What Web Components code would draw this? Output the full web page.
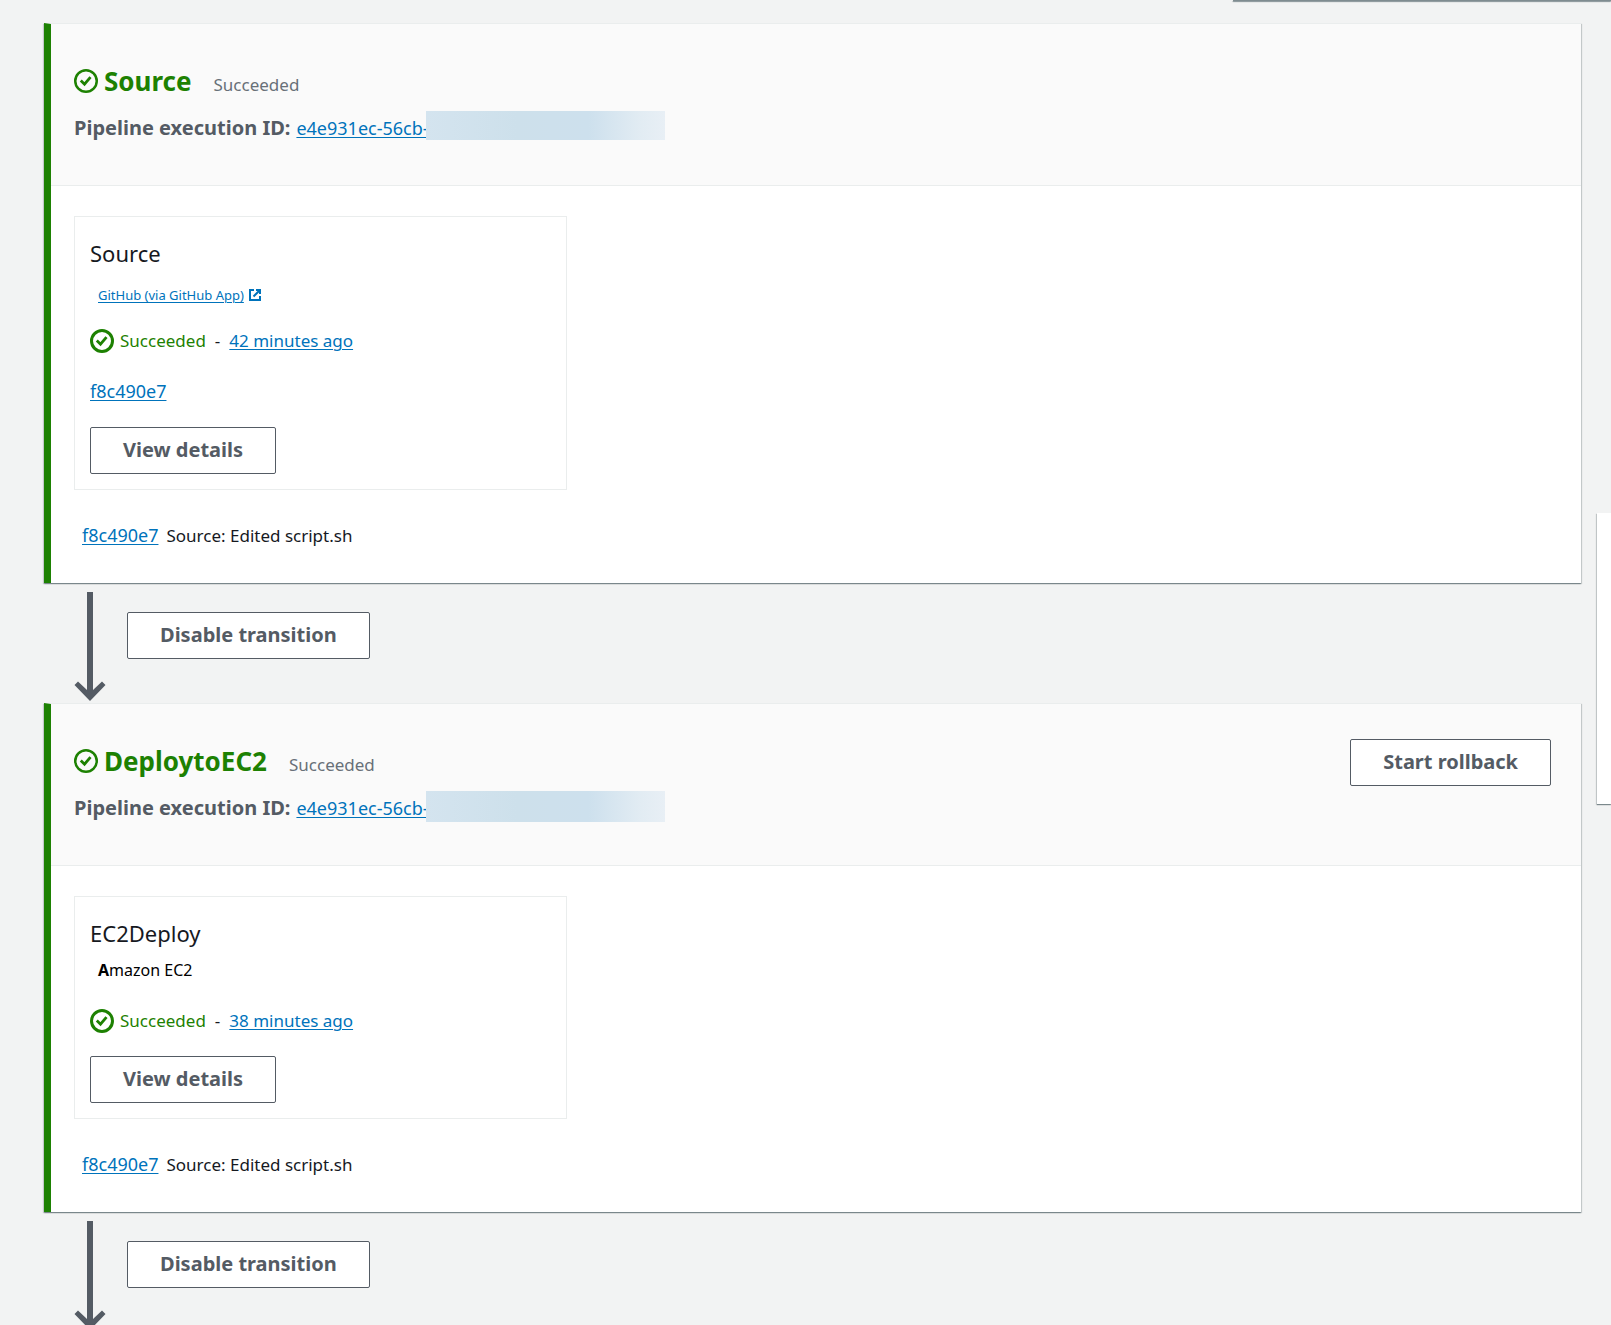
<!DOCTYPE html>
<html lang="en">
<head>
<meta charset="utf-8">
<title>Pipeline</title>
<style>
body{
	margin:0;
	background:#f2f3f3;
	color:#16191f;
	font-family:"Noto Sans","Open Sans",sans-serif;
	font-size:17px;
	line-height:24px;
}
</style>
</head>
<body>
<pipeline-view>
	<side-panel class="top"></side-panel>
	<side-panel class="help"></side-panel>
	<pipeline-stage name="Source" execution="e4e931ec-56cb-">
		<stage-action name="Source" when="42 minutes ago" revision="f8c490e7">
			<external-link slot="provider">GitHub (via GitHub App)</external-link>
		</stage-action>
		<commit-line slot="commit" revision="f8c490e7">Source: Edited script.sh</commit-line>
	</pipeline-stage>
	<stage-transition></stage-transition>
	<pipeline-stage name="DeploytoEC2" execution="e4e931ec-56cb-" class="tall-mask">
		<aws-button slot="actions">Start rollback</aws-button>
		<stage-action name="EC2Deploy" when="38 minutes ago">
			<span slot="provider"><b>A</b>mazon EC2</span>
		</stage-action>
		<commit-line slot="commit" revision="f8c490e7">Source: Edited script.sh</commit-line>
	</pipeline-stage>
	<stage-transition></stage-transition>
</pipeline-view>

<script>
const linkStyle = `
a{
	color:#0073bb;
	text-decoration:underline;
	text-underline-offset:2px;
	text-decoration-thickness:1px;
}
`
const render = (element, html) => {
	const template = document.createElement("template")
	template.innerHTML = html
	element.attachShadow({mode: "open"}).appendChild(template.content.cloneNode(true))
}

class PipelineView extends HTMLElement{
	constructor(){
		super()
		render(this, `
<style>
:host{
	display:block;
	position:relative;
	box-sizing:border-box;
	height:100vh;
	overflow:hidden;
	padding:23px 30px 0 44px;
}
</style>
<slot></slot>`)
	}
}

// neighbouring panels that peek in over the edges of the view
class SidePanel extends HTMLElement{
	constructor(){
		super()
		render(this, `
<style>
:host{
	position:absolute;
	right:0;
	background:#fff;
	box-shadow:0 1px 1px 0 rgba(0,28,36,0.4), -1px 1px 1px 0 rgba(0,28,36,0.15);
}
:host(.top){
	top:0;
	width:378px;
	height:1px;
	background:#7f8c90;
}
:host(.help){
	top:513px;
	width:14px;
	height:291px;
}
</style>`)
	}
}

class AwsButton extends HTMLElement{
	constructor(){
		super()
		render(this, `
<style>
:host{
	display:inline-block;
}
button{
	display:block;
	padding:0 32px 2px;
	border:1px solid #545b64;
	border-radius:2px;
	background:#fff;
	color:#545b64;
	font:bold 20px/43px "Noto Sans","Open Sans",sans-serif;
	white-space:nowrap;
	cursor:pointer;
}
button:hover{
	background:#fafafa;
	color:#16191f;
}
</style>
<button type="button"><slot></slot></button>`)
	}
}

class StatusIcon extends HTMLElement{
	constructor(){
		super()
		const weight = this.getAttribute("weight") || 2.5
		render(this, `
<style>
:host{
	display:block;
	flex:none;
	width:24px;
	height:24px;
	color:#1d8102;
}
svg{
	display:block;
}
</style>
<svg width="24" height="24" viewBox="0 0 24 24" fill="none" stroke="currentColor" stroke-width="${weight}" aria-hidden="true">
	<circle cx="12" cy="12" r="${12 - weight / 2}"/>
	<path d="M6.800 11.500l3.700 3.700 6-7" stroke-width="2.800"/>
</svg>`)
	}
}

class ExternalLink extends HTMLElement{
	constructor(){
		super()
		render(this, `
<style>
${linkStyle}
:host{
	display:block;
	padding:5px 0;
	margin-bottom:-10px;
	font-size:13px;
}
a{
	display:inline-flex;
	align-items:center;
	gap:5px;
	text-decoration:none;
}
span{
	text-decoration:underline;
	text-underline-offset:2px;
}
</style>
<a href="#"><span><slot></slot></span><svg width="12" height="12" viewBox="0 0 12 12" fill="none" stroke="currentColor" stroke-width="2" aria-hidden="true">
	<path d="M5 1H1v10h10V7"/>
	<path d="M7 1h4v4M11 1L4.500 7.500"/>
</svg></a>`)
	}
}

class CommitLine extends HTMLElement{
	constructor(){
		super()
		render(this, `
<style>
${linkStyle}
:host{
	display:flex;
	align-items:baseline;
	gap:8px;
	padding:33px 8px 35px;
}
a{
	font-size:18px;
}
</style>
<a href="#">${this.getAttribute("revision")}</a><span><slot></slot></span>`)
	}
}

class StageAction extends HTMLElement{
	constructor(){
		super()
		const revision = this.getAttribute("revision")
		render(this, `
<style>
${linkStyle}
:host{
	display:block;
	box-sizing:border-box;
	max-width:493px;
	padding:21px 15px 15px;
	border:1px solid #eaeded;
}
h3{
	margin:0;
	font-size:22px;
	font-weight:400;
	line-height:30px;
}
.provider{
	height:24px;
	padding:10px 8px 27px;
	font-size:16px;
	color:#000;
}
.status{
	display:flex;
	align-items:center;
	gap:6px;
	margin-bottom:23px;
}
.status b{
	color:#1d8102;
	font-weight:400;
}
.dash{
	padding:0 3px;
}
.revision{
	margin:0 0 24px;
	padding-top:3px;
	font-size:18px;
}
</style>
<h3>${this.getAttribute("name")}</h3>
<div class="provider"><slot name="provider"></slot></div>
<div class="status">
	<status-icon weight="3"></status-icon>
	<b>Succeeded</b><span class="dash">-</span><a href="#">${this.getAttribute("when")}</a>
</div>
${revision ? `<p class="revision"><a href="#">${revision}</a></p>` : ""}
<aws-button>View details</aws-button>`)
	}
}

class PipelineStage extends HTMLElement{
	constructor(){
		super()
		render(this, `
<style>
${linkStyle}
:host{
	display:block;
	border-top:1px solid #eaeded;
	border-left:7px solid #1d8102;
	background:#fff;
	box-shadow:0 1px 1px 0 rgba(0,28,36,0.3), 1px 1px 1px 0 rgba(0,28,36,0.15), -1px 1px 1px 0 rgba(0,28,36,0.15);
}
header{
	display:flex;
	justify-content:space-between;
	align-items:flex-start;
	padding:35px 30px 40px 23px;
	border-bottom:1px solid #eaeded;
	background:#fafafa;
}
.heading{
	padding-top:6px;
}
.title{
	display:flex;
	align-items:baseline;
	gap:6px;
	margin-bottom:14px;
}
status-icon{
	align-self:center;
}
h2{
	margin:0;
	color:#1d8102;
	font-size:26px;
	line-height:32px;
}
.state{
	margin-left:16px;
	color:#687078;
}
.execution{
	display:flex;
	align-items:baseline;
	height:34px;
	line-height:34px;
}
.execution b{
	margin-right:6px;
	color:#545b64;
	font-size:20px;
}
.execution a{
	font-size:18px;
}
/* covers the tail of the execution id */
.mask{
	align-self:flex-start;
	width:239px;
	height:29px;
	margin-left:-3px;
	background:linear-gradient(90deg, #d4e4ef, #cde0eb 38%, #cde0ed 68%, #e2ecf3 90%, #e8eff5);
}
:host(.tall-mask) .mask{
	height:31px;
}
.body{
	padding:30px 23px 0;
}
</style>
<header>
	<div class="heading">
		<div class="title">
			<status-icon></status-icon>
			<h2>${this.getAttribute("name")}</h2>
			<span class="state">Succeeded</span>
		</div>
		<div class="execution">
			<b>Pipeline execution ID:</b>
			<a href="#">${this.getAttribute("execution")}</a>
			<span class="mask"></span>
		</div>
	</div>
	<slot name="actions"></slot>
</header>
<div class="body">
	<slot></slot>
	<slot name="commit"></slot>
</div>`)
	}
}

class StageTransition extends HTMLElement{
	constructor(){
		super()
		render(this, `
<style>
:host{
	display:flex;
	align-items:flex-start;
	gap:21px;
	padding:9px 30px 2px;
}
svg{
	flex:none;
	color:#545b64;
}
aws-button{
	margin-top:20px;
}
</style>
<svg width="32" height="109" viewBox="0 0 32 109" fill="currentColor" aria-hidden="true">
	<path d="M13 0h6v98l9-8.500 3.500 3.500L16 109 .5 93 4 89.500l9 8.500z"/>
</svg>
<aws-button>Disable transition</aws-button>`)
	}
}

window.customElements.define("pipeline-view", PipelineView)
window.customElements.define("side-panel", SidePanel)
window.customElements.define("aws-button", AwsButton)
window.customElements.define("status-icon", StatusIcon)
window.customElements.define("external-link", ExternalLink)
window.customElements.define("commit-line", CommitLine)
window.customElements.define("stage-action", StageAction)
window.customElements.define("pipeline-stage", PipelineStage)
window.customElements.define("stage-transition", StageTransition)
</script>
</body>
</html>
